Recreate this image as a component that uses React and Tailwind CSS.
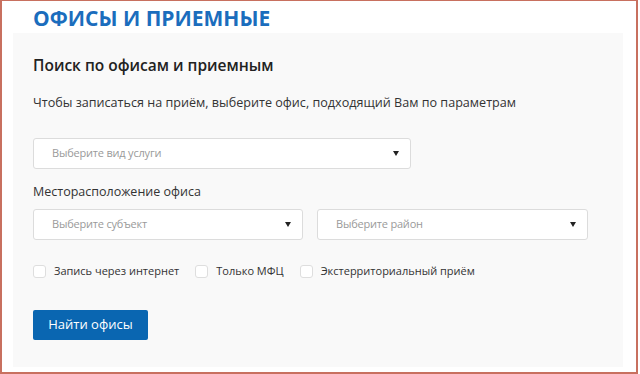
import React from 'react';

const font = { fontFamily: '"Open Sans", "Noto Sans", sans-serif' };

const Arrow = () => (
  <svg width="6" height="5" viewBox="0 0 6 5" className="shrink-0">
    <path d="M0 0 H6 L3 5 Z" fill="#222" />
  </svg>
);

const Select = ({ placeholder, className }) => (
  <div
    className={`flex items-center justify-between h-[31px] bg-white border border-[#dcdcdc] rounded-[3px] pl-[18px] pr-[11px] ${className}`}
  >
    <span className="text-[11px] tracking-[-0.2px] text-[#9a9a9a]">{placeholder}</span>
    <Arrow />
  </div>
);

const Check = ({ label }) => (
  <label className="flex items-center gap-[8px]">
    <span className="w-[13px] h-[13px] bg-white border border-[#dedede] rounded-[3px]" />
    <span className="text-[11px] text-[#333]">{label}</span>
  </label>
);

export default function App() {
  return (
    <div
      className="w-[638px] h-[374px] border-2 border-t border-[#c8705f] bg-white pl-[11px] flex flex-col"
      style={font}
    >
      <div className="h-[32px] pl-[20px] flex items-center">
        <h1 className="text-[21px] leading-none font-bold text-[#1b6dbd] pt-[3px]">ОФИСЫ И ПРИЕМНЫЕ</h1>
      </div>
      <div className="w-[610px] h-[334px] bg-[#f9f9f9] px-[20px] pt-[21px]">
        <h2 className="text-[15.5px] leading-[22px] font-semibold text-[#222]">Поиск по офисам и приемным</h2>
        <p className="mt-[18px] text-[12.6px] leading-[18px] text-[#333]">
          Чтобы записаться на приём, выберите офис, подходящий Вам по параметрам
        </p>
        <Select placeholder="Выберите вид услуги" className="mt-[26px] w-[378px]" />
        <p className="mt-[14px] text-[12.5px] leading-[18px] text-[#333]">Месторасположение офиса</p>
        <div className="mt-[8px] flex gap-[14px]">
          <Select placeholder="Выберите субъект" className="w-[270px]" />
          <Select placeholder="Выберите район" className="w-[271px]" />
        </div>
        <div className="mt-[22px] h-[18px] flex items-center gap-[16px]">
          <Check label="Запись через интернет" />
          <Check label="Только МФЦ" />
          <Check label="Экстерриториальный приём" />
        </div>
        <button className="mt-[30px] w-[115px] h-[30px] bg-[#0a66b1] rounded-[2px] text-white text-[13px]">
          Найти офисы
        </button>
      </div>
    </div>
  );
}
